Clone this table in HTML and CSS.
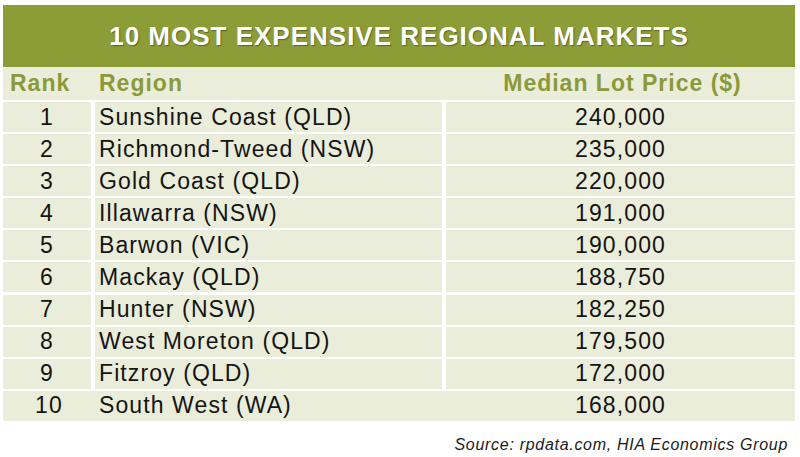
FILE: index.html
```html
<!DOCTYPE html>
<html>
<head>
<meta charset="utf-8">
<link rel="stylesheet" href="styles.css">
</head>
<body>
<div class="page">
  <div class="title">10 MOST EXPENSIVE REGIONAL MARKETS</div>
  <div class="head-row">
    <div class="h-rank">Rank</div>
    <div class="h-region">Region</div>
    <div class="h-price">Median Lot Price ($)</div>
  </div>
  <div class="rows">
    <div class="row"><div class="c rank">1</div><div class="c region">Sunshine Coast (QLD)</div><div class="c price">240,000</div></div>
    <div class="row"><div class="c rank">2</div><div class="c region">Richmond-Tweed (NSW)</div><div class="c price">235,000</div></div>
    <div class="row"><div class="c rank">3</div><div class="c region">Gold Coast (QLD)</div><div class="c price">220,000</div></div>
    <div class="row"><div class="c rank">4</div><div class="c region">Illawarra (NSW)</div><div class="c price">191,000</div></div>
    <div class="row"><div class="c rank">5</div><div class="c region">Barwon (VIC)</div><div class="c price">190,000</div></div>
    <div class="row"><div class="c rank">6</div><div class="c region">Mackay (QLD)</div><div class="c price">188,750</div></div>
    <div class="row"><div class="c rank">7</div><div class="c region">Hunter (NSW)</div><div class="c price">182,250</div></div>
    <div class="row"><div class="c rank">8</div><div class="c region">West Moreton (QLD)</div><div class="c price">179,500</div></div>
    <div class="row"><div class="c rank">9</div><div class="c region">Fitzroy (QLD)</div><div class="c price">172,000</div></div>
    <div class="row last"><div class="c rank">10</div><div class="c region">South West (WA)</div><div class="c price">168,000</div></div>
  </div>
  <div class="source">Source: rpdata.com, HIA Economics Group</div>
</div>
</body>
</html>
```
FILE: styles.css
```css
html, body {
  margin: 0;
  padding: 0;
  background: #ffffff;
}
.page {
  width: 800px;
  height: 457px;
  box-sizing: border-box;
  padding: 5px 5px 0 3px;
  font-family: "Liberation Sans", Arial, sans-serif;
  color: #141414;
}
.title {
  height: 62px;
  background: #8c9c37;
  color: #ffffff;
  font-weight: bold;
  font-size: 26px;
  letter-spacing: 1px;
  display: flex;
  align-items: center;
  justify-content: center;
  text-shadow: 1px 1px 1px rgba(60, 70, 20, 0.6);
}
.head-row {
  height: 33px;
  background: #eaedd9;
  display: grid;
  grid-template-columns: 92px 351px 1fr;
  align-items: center;
  color: #8a9a38;
  font-weight: bold;
  font-size: 23px;
  letter-spacing: 1px;
}
.h-rank { padding-left: 7px; }
.h-region { padding-left: 4px; }
.h-price { text-align: center; padding-left: 4px; }
.rows {
  display: flex;
  flex-direction: column;
  gap: 2.1px;
  padding-top: 2px;
}
.row {
  height: 30px;
  display: grid;
  grid-template-columns: 88px 347px 1fr;
  column-gap: 4px;
  font-size: 23px;
  letter-spacing: 1.1px;
}
.row.last {
  column-gap: 0;
  grid-template-columns: 92px 351px 1fr;
}
.c {
  background: #eaedd9;
  display: flex;
  align-items: center;
}
.rank { justify-content: center; }
.region { padding-left: 4px; }
.price { justify-content: center; }
.source {
  text-align: right;
  font-style: italic;
  font-size: 16px;
  letter-spacing: 0.7px;
  padding-right: 7px;
  margin-top: 15px;
  color: #1a1a1a;
}
```
